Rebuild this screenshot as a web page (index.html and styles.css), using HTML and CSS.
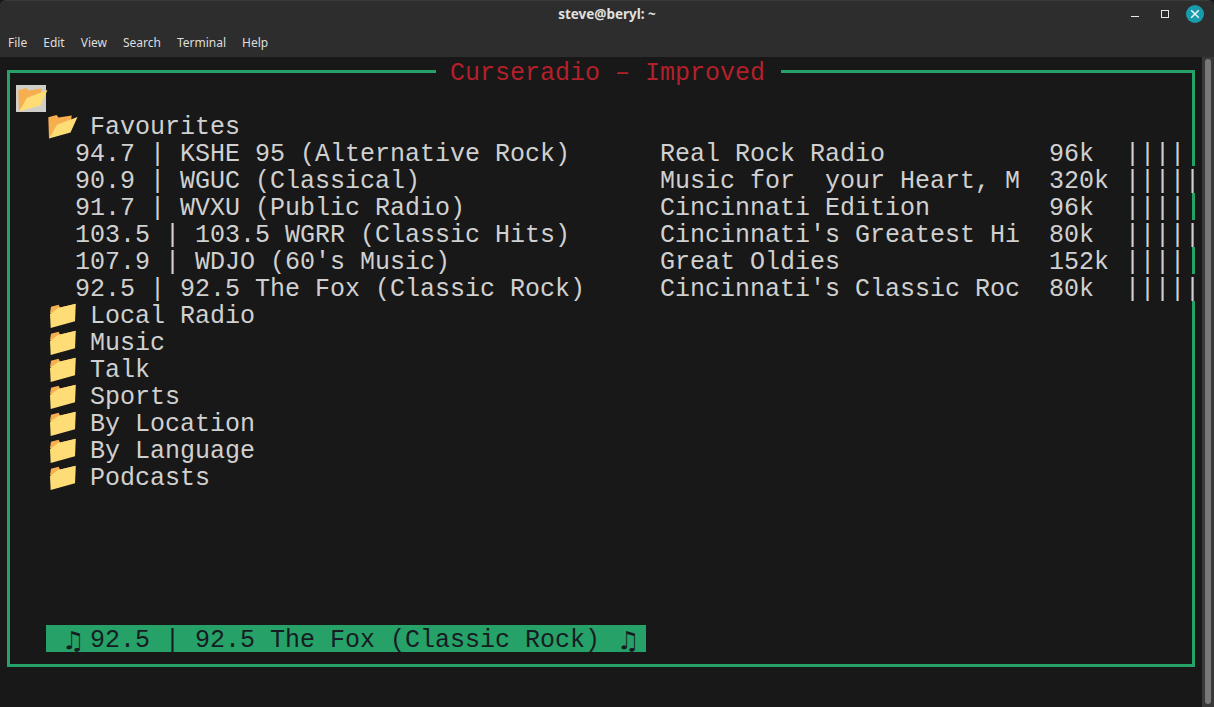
FILE: index.html
```html
<!DOCTYPE html>
<html lang="en">
<head>
<meta charset="utf-8">
<title>steve@beryl: ~</title>
<link rel="stylesheet" href="styles.css">
</head>
<body>
<svg class="defs" width="0" height="0" aria-hidden="true">
  <symbol id="folder-open" viewBox="0 0 32 27">
    <path fill="#f6ae4e" d="M2.3 5.2 10.6 3l1.9 2.4 13.2-1.8-.7 7L3 26.5Z"/>
    <path fill="#fedc76" d="M3 26.5 11 12.7 31.5 5 24.5 20.5Z"/>
  </symbol>
  <symbol id="folder-closed" viewBox="0 0 32 27">
    <path fill="#f6ae4e" d="M4 12 5 5.8 12.6 3.8 14 6.4 29 3 27 9 12 12Z"/>
    <path fill="#fedc76" d="M4 13 12 7 29.8 2.8 29 20.3 4.7 27Z"/>
  </symbol>
</svg>
<div class="window">
  <header class="titlebar">
    <div class="title-row">
      <span></span>
      <h1 class="title">steve@beryl: ~</h1>
      <div class="controls">
        <svg class="ctl" width="10" height="10" viewBox="0 0 10 10"><path d="M1 7.5h8" stroke="#e8e8e8" stroke-width="1" fill="none"/></svg>
        <svg class="ctl" width="10" height="10" viewBox="0 0 10 10"><rect x="1.5" y="1.5" width="7" height="7" stroke="#e8e8e8" stroke-width="1" fill="none"/></svg>
        <svg class="ctl-close" width="18" height="18" viewBox="0 0 18 18"><circle cx="9" cy="9" r="9" fill="#189cab"/><path d="M5.2 5.2l7.6 7.6M12.8 5.2l-7.6 7.6" stroke="#f2f8f8" stroke-width="1.4" fill="none"/></svg>
      </div>
    </div>
    <nav class="menu">
      <span class="menu-item">File</span>
      <span class="menu-item">Edit</span>
      <span class="menu-item">View</span>
      <span class="menu-item">Search</span>
      <span class="menu-item">Terminal</span>
      <span class="menu-item">Help</span>
    </nav>
  </header>
  <main class="terminal">
    <div class="screen">
      <div class="frame">
        <div class="frame-title">Curseradio – Improved</div>
        <div class="row root"><span class="root-cell"><svg class="folder"><use href="#folder-open"/></svg></span></div>
        <div class="row node"><svg class="folder"><use href="#folder-open"/></svg><span>Favourites</span></div>
        <div class="row station"><span>94.7 | KSHE 95 (Alternative Rock)</span><span>Real Rock Radio</span><span>96k</span><span>||||</span></div>
        <div class="row station"><span>90.9 | WGUC (Classical)</span><span>Music for  your Heart, M</span><span>320k</span><span>||||<span class="over">|</span></span></div>
        <div class="row station"><span>91.7 | WVXU (Public Radio)</span><span>Cincinnati Edition</span><span>96k</span><span>||||</span></div>
        <div class="row station"><span>103.5 | 103.5 WGRR (Classic Hits)</span><span>Cincinnati's Greatest Hi</span><span>80k</span><span>||||<span class="over">|</span></span></div>
        <div class="row station"><span>107.9 | WDJO (60's Music)</span><span>Great Oldies</span><span>152k</span><span>||||</span></div>
        <div class="row station"><span>92.5 | 92.5 The Fox (Classic Rock)</span><span>Cincinnati's Classic Roc</span><span>80k</span><span>||||<span class="over">|</span></span></div>
        <div class="row node"><svg class="folder"><use href="#folder-closed"/></svg><span>Local Radio</span></div>
        <div class="row node"><svg class="folder"><use href="#folder-closed"/></svg><span>Music</span></div>
        <div class="row node"><svg class="folder"><use href="#folder-closed"/></svg><span>Talk</span></div>
        <div class="row node"><svg class="folder"><use href="#folder-closed"/></svg><span>Sports</span></div>
        <div class="row node"><svg class="folder"><use href="#folder-closed"/></svg><span>By Location</span></div>
        <div class="row node"><svg class="folder"><use href="#folder-closed"/></svg><span>By Language</span></div>
        <div class="row node"><svg class="folder"><use href="#folder-closed"/></svg><span>Podcasts</span></div>
        <div class="row status"><span class="note">♫</span><span class="now">92.5 | 92.5 The Fox (Classic Rock)</span><span class="note">♫</span></div>
      </div>
    </div>
    <div class="scrollbar"><div class="thumb"></div></div>
  </main>
</div>
</body>
</html>
```
FILE: styles.css
```css
* { box-sizing: border-box; }
html, body { margin: 0; height: 100%; background: #181818; overflow: hidden; }
.defs { position: absolute; }

.window {
  width: 1214px;
  height: 707px;
  display: flex;
  flex-direction: column;
  background: #181818;
}

.titlebar {
  height: 57px;
  flex: none;
  background: #2d2d2d;
  border-radius: 6px 6px 0 0;
  border-top: 1px solid #3a3a3a;
  font-family: "Noto Sans", sans-serif;
  color: #dedede;
}
.title-row {
  height: 26px;
  display: grid;
  grid-template-columns: 1fr auto 1fr;
  align-items: center;
}
.title {
  margin: 0;
  font-size: 13.5px;
  font-weight: 700;
  line-height: 26px;
  color: #e0e0e0;
}
.controls {
  display: flex;
  justify-content: flex-end;
  align-items: center;
  padding-right: 10px;
  gap: 20px;
}
.ctl-close { margin-left: -4px; }

.menu {
  height: 30px;
  padding-top: 1px;
  display: flex;
  align-items: center;
}
.menu-item {
  font-size: 12px;
  line-height: 29px;
  padding: 0 8px;
}

.terminal {
  flex: 1;
  display: flex;
  min-height: 0;
}
.screen {
  width: 1202px;
  padding: 13px 0 0 7px;
  font-family: "Liberation Mono", monospace;
  font-size: 25px;
  line-height: 31px;
  color: #d0d0d0;
}

.frame {
  position: relative;
  width: 1188px;
  height: 597px;
  padding-top: 12px;
  border: 3px solid #26a269;
  display: flex;
  flex-direction: column;
}
.frame-title {
  position: absolute;
  left: 426px;
  top: -15px;
  width: 345px;
  height: 27px;
  padding-left: 14px;
  background: #181818;
  color: #b3202a;
  white-space: pre;
}

.row { height: 27px; flex: none; white-space: pre; }

.root-cell {
  display: block;
  width: 30px;
  height: 27px;
  margin-left: 6px;
  background: #cfcec9;
}
.folder {
  display: block;
  width: 32px;
  height: 27px;
  overflow: visible;
}

.node {
  display: flex;
  padding-left: 36px;
}
.node .folder { margin-right: 12px; }

.station {
  display: grid;
  grid-template-columns: 585px 389px 76px 75px;
  padding-left: 65px;
}
.over {
  display: inline-block;
  width: 1ch;
  height: 27px;
  background: #181818;
  vertical-align: top;
}

.status {
  margin-top: auto;
  margin-bottom: 12px;
  margin-left: 36px;
  width: 600px;
  padding-left: 14px;
  display: flex;
  background: #26a269;
  color: #171c22;
}
.note { width: 30px; padding-left: 2px; font-family: "DejaVu Sans", sans-serif; }
.now { width: 35ch; }

.scrollbar {
  width: 12px;
  padding: 2px 3px 3px;
  background: #383838;
}
.thumb {
  height: 100%;
  border-radius: 3px;
  background: #787878;
}
```
